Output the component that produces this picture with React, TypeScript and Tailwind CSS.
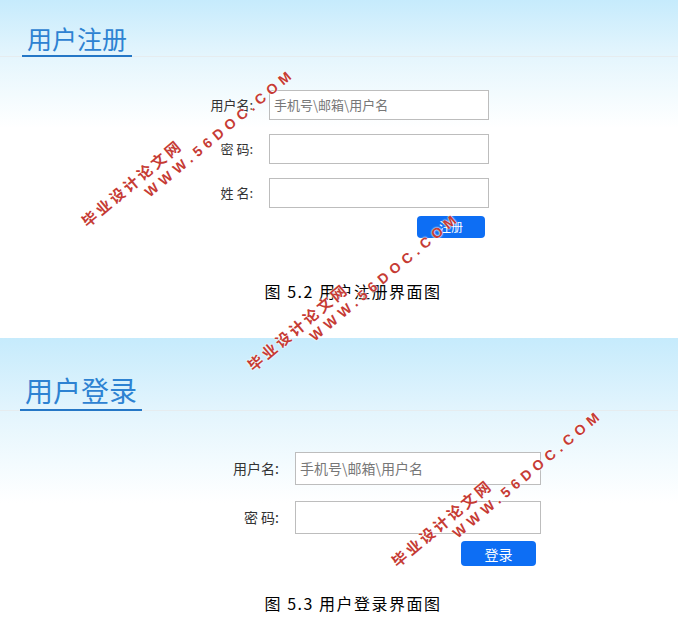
import React from 'react';

const cjk = "font-['Noto_Sans_CJK_SC','Noto_Sans',sans-serif]";

// watermark lines, centre point of each line in page coordinates
const marks = [
    { zh: 'left-[132px] top-[183px]', en: 'left-[220px] top-[133px]' },
    { zh: 'left-[298px] top-[327px]', en: 'left-[385px] top-[277px]' },
    { zh: 'left-[442px] top-[523px]', en: 'left-[528px] top-[474px]' },
];

function Field({ label, placeholder, labelW, inputW, inputH, textSize }: {
    label: string;
    placeholder?: string;
    labelW: string;
    inputW: string;
    inputH: string;
    textSize: string;
}) {
    return (
        <div className="flex items-center">
            <span className={`${labelW} ${textSize} text-right text-[#333] whitespace-pre`}>{label}</span>
            <div className={`${inputW} ${inputH} ml-[16px] border border-[#bdbdbd] bg-white flex items-center px-[4px] ${textSize} text-[#777]`}>
                {placeholder}
            </div>
        </div>
    );
}

export default function App() {
    return (
        <div className={`relative w-[678px] h-[622px] overflow-hidden bg-white ${cjk}`}>
            {/* 用户注册 */}
            <div className="bg-[linear-gradient(to_bottom,#c6ebfc_0px,#e4f5fd_55px,#f3fbfe_95px,#ffffff_128px)] pb-[43px]">
                <div className="pt-[23px] pl-[22px] border-b border-[#e6ecef]">
                    <div className="inline-block border-b-2 border-[#2577c6] -mb-px px-[5px] pb-[2px] text-[25px] leading-[30px] text-[#2d82d2]">
                        用户注册
                    </div>
                </div>
                <div className="mt-[33px] ml-[200px] flex flex-col gap-[14px]">
                    <Field label="用户名:" placeholder="手机号\邮箱\用户名" labelW="w-[53px]" inputW="w-[220px]" inputH="h-[30px]" textSize="text-[13px]" />
                    <Field label="密 码:" labelW="w-[53px]" inputW="w-[220px]" inputH="h-[30px]" textSize="text-[13px]" />
                    <Field label="姓 名:" labelW="w-[53px]" inputW="w-[220px]" inputH="h-[30px]" textSize="text-[13px]" />
                </div>
                <div className="mt-[8px] pl-[417px] flex">
                    <button className="w-[68px] h-[22px] rounded-[4px] bg-[#0d6ef4] text-white text-[12px] leading-none">注册</button>
                </div>
            </div>
            <p className="text-center text-[16px] leading-[20px] tracking-[1.5px] text-black pl-[28px]">图 5.2 用户注册界面图</p>

            {/* 用户登录 */}
            <div className="mt-[37px] bg-[linear-gradient(to_bottom,#c6ebfc_0px,#e4f5fd_76px,#f3fbfe_125px,#ffffff_165px)]">
                <div className="pt-[35px] pl-[20px] border-b border-[#e6ecef]">
                    <div className="inline-block border-b-2 border-[#2577c6] -mb-px px-[5px] pb-[2px] text-[28px] leading-[34px] text-[#2d82d2]">
                        用户登录
                    </div>
                </div>
                <div className="mt-[41px] ml-[222px] flex flex-col gap-[16px]">
                    <Field label="用户名:" placeholder="手机号\邮箱\用户名" labelW="w-[57px]" inputW="w-[246px]" inputH="h-[33px]" textSize="text-[14px]" />
                    <Field label="密 码:" labelW="w-[57px]" inputW="w-[246px]" inputH="h-[33px]" textSize="text-[14px]" />
                </div>
                <div className="mt-[7px] pl-[461px] flex">
                    <button className="w-[75px] h-[25px] rounded-[4px] bg-[#0d6ef4] text-white text-[14px] leading-none">登录</button>
                </div>
            </div>
            <p className="mt-[27px] text-center text-[16px] leading-[20px] tracking-[1.5px] text-black pl-[28px]">图 5.3 用户登录界面图</p>

            {/* watermarks */}
            {marks.map((m, i) => (
                <React.Fragment key={i}>
                    <span className={`absolute ${m.zh} -translate-x-1/2 -translate-y-1/2 -rotate-40 whitespace-nowrap text-[15px] font-bold tracking-[3px] text-[#c63b34] [text-shadow:0_0_2px_#fff,0_0_2px_#fff]`}>
                        毕业设计论文网
                    </span>
                    <span className={`absolute ${m.en} -translate-x-1/2 -translate-y-1/2 -rotate-40 whitespace-nowrap font-['Liberation_Sans',sans-serif] text-[14px] font-bold tracking-[5px] text-[#c63b34] [text-shadow:0_0_2px_#fff,0_0_2px_#fff]`}>
                        WWW.56DOC.COM
                    </span>
                </React.Fragment>
            ))}
        </div>
    );
}
